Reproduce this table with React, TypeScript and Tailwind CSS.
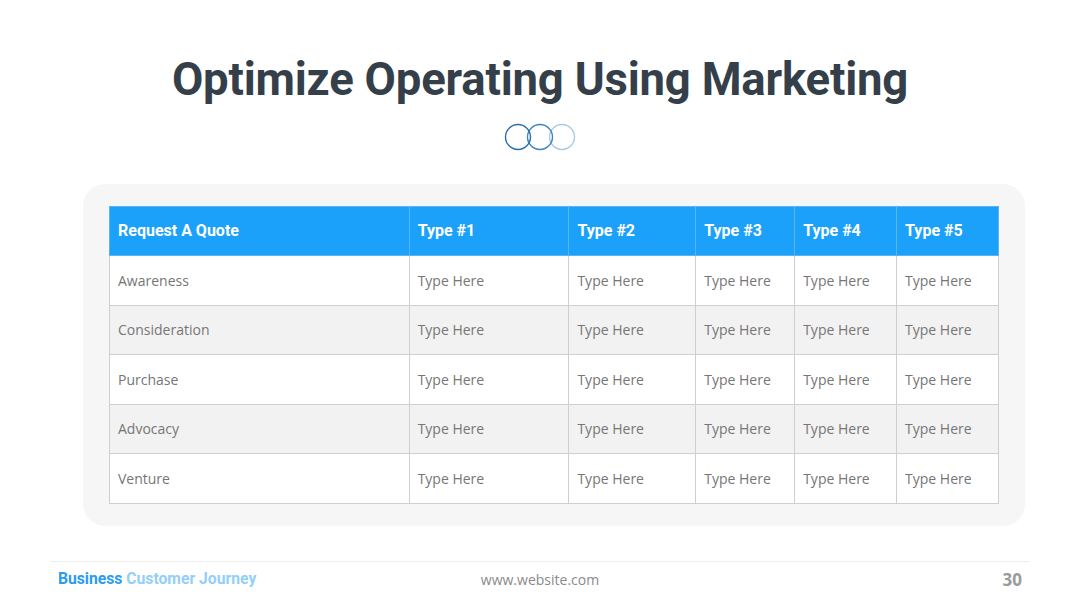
const cols = ["Type #1", "Type #2", "Type #3", "Type #4", "Type #5"];
const widths = ["w-[300px]", "w-[160px]", "w-[127px]", "w-[99px]", "w-[102px]", "w-[102px]"];
const rows = ["Awareness", "Consideration", "Purchase", "Advocacy", "Venture"];

function Rings() {
  return (
    <svg width="74" height="30" viewBox="0 0 74 30" className="block">
      <circle cx="59" cy="15" r="12.5" fill="none" stroke="#a9cbe6" strokeWidth="1.4" />
      <circle cx="37" cy="15" r="12.5" fill="none" stroke="#3d84c0" strokeWidth="1.4" />
      <circle cx="15" cy="15" r="12.5" fill="none" stroke="#2b6faa" strokeWidth="1.4" />
    </svg>
  );
}

export default function App() {
  return (
    <div className="flex h-[608px] w-[1080px] flex-col items-center bg-white font-['Roboto',sans-serif]">
      <h1 className="mt-[50px] text-[45.5px] font-bold leading-[60px] tracking-[-0.2px] text-[#343f4a]">
        Optimize Operating Using Marketing
      </h1>
      <div className="mt-[12px]">
        <Rings />
      </div>

      <div className="ml-[28px] mt-[32px] w-[942px] rounded-[22px] bg-[#f6f6f6] px-[26px] py-[22px]">
        <table className="border-collapse font-['Open_Sans',sans-serif]">
          <thead>
            <tr className="h-[49px] bg-[#1ca1fb]">
              <th className={`${widths[0]} border border-[#5ab4f0] px-[8px] text-left font-['Roboto',sans-serif] text-[16px] font-bold text-white`}>
                Request A Quote
              </th>
              {cols.map((c, i) => (
                <th
                  key={c}
                  className={`${widths[i + 1]} border border-[#5ab4f0] px-[8px] text-left font-['Roboto',sans-serif] text-[16px] font-bold text-white`}
                >
                  {c}
                </th>
              ))}
            </tr>
          </thead>
          <tbody>
            {rows.map((r, ri) => (
              <tr key={r} className={`h-[49.5px] ${ri % 2 === 1 ? "bg-[#f2f2f2]" : "bg-white"}`}>
                <td className="border border-[#cfcfcf] px-[8px] text-[14px] text-[#767676]">{r}</td>
                {cols.map((c) => (
                  <td key={c} className="border border-[#cfcfcf] px-[8px] text-[14px] text-[#767676]">
                    Type Here
                  </td>
                ))}
              </tr>
            ))}
          </tbody>
        </table>
      </div>

      <div className="mt-[35px] h-px w-[980px] bg-[#eeeeee]" />
      <div className="grid w-[980px] grid-cols-3 items-center pt-[5px]">
        <div className="pl-[8px] text-[15.7px] font-bold text-[#2a9cf2]">
          Business <span className="text-[#93cff7]">Customer Journey</span>
        </div>
        <div className="text-center font-['Open_Sans',sans-serif] text-[14px] text-[#8a8a8a]">
          www.website.com
        </div>
        <div className="pr-[8px] text-right font-['Open_Sans',sans-serif] text-[17px] font-bold text-[#9a9a9a]">
          30
        </div>
      </div>
    </div>
  );
}
